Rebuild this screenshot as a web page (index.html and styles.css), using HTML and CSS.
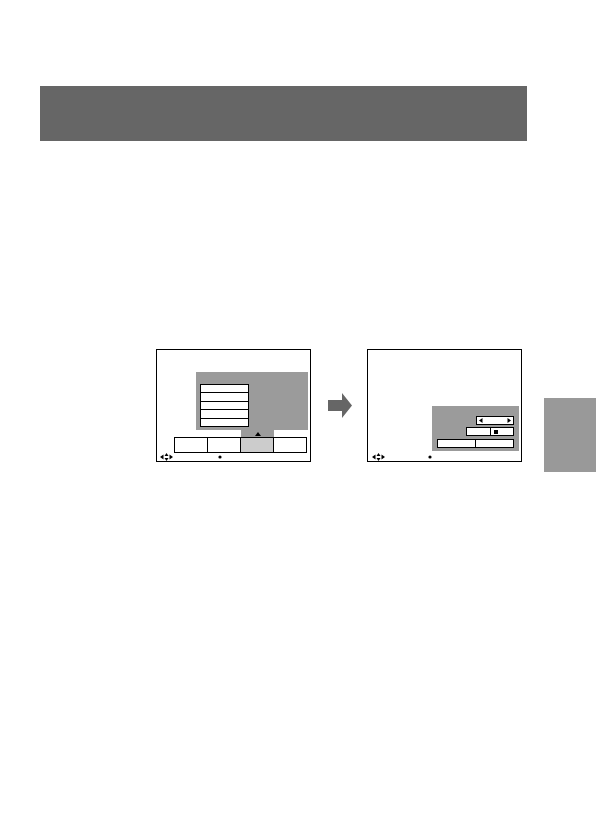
FILE: index.html
```html
<!DOCTYPE html>
<html>
<head>
<meta charset="utf-8">
<link rel="stylesheet" href="styles.css">
</head>
<body>
<div class="header"></div>
<div class="figure">
  <div class="screen s1">
    <div class="panel1">
      <div class="list">
        <div class="item"></div>
        <div class="item"></div>
        <div class="item"></div>
        <div class="item"></div>
        <div class="item"></div>
      </div>
    </div>
    <div class="tab"><span class="tri"></span></div>
    <div class="buttons">
      <div class="btn"></div>
      <div class="btn"></div>
      <div class="btn active"></div>
      <div class="btn"></div>
    </div>
    <div class="footer f1">
      <svg class="nav" width="13" height="8" viewBox="0 0 13 8"><polygon points="0,4 3.5,1.5 3.5,6.5" fill="#000"/><polygon points="6.5,0 4.5,3 8.5,3" fill="#000"/><polygon points="6.5,8 4.5,5 8.5,5" fill="#000"/><polygon points="13,4 9.5,1.5 9.5,6.5" fill="#000"/></svg>
      <svg class="dot" width="4" height="4" viewBox="0 0 4 4"><circle cx="2" cy="2" r="1.6" fill="#000"/></svg>
    </div>
  </div>
  <svg class="arrow" width="24" height="25" viewBox="0 0 24 25"><polygon points="0,7 14,7 14,0 24,12.5 14,25 14,18 0,18" fill="#666"/></svg>
  <div class="screen s2">
    <div class="panel2">
      <div class="box b1">
        <svg width="36" height="7" viewBox="0 0 36 7"><polygon points="2,3.5 5.5,1 5.5,6" fill="#000"/><polygon points="34,3.5 30.5,1 30.5,6" fill="#000"/></svg>
      </div>
      <div class="box b2"><div class="cell"></div><div class="cell"><span class="sq"></span></div></div>
      <div class="box b3"><div class="cell"></div><div class="cell"></div></div>
    </div>
    <div class="footer f2">
      <svg class="nav" width="13" height="8" viewBox="0 0 13 8"><polygon points="0,4 3.5,1.5 3.5,6.5" fill="#000"/><polygon points="6.5,0 4.5,3 8.5,3" fill="#000"/><polygon points="6.5,8 4.5,5 8.5,5" fill="#000"/><polygon points="13,4 9.5,1.5 9.5,6.5" fill="#000"/></svg>
      <svg class="dot" width="4" height="4" viewBox="0 0 4 4"><circle cx="2" cy="2" r="1.6" fill="#000"/></svg>
    </div>
  </div>
  <div class="sidetab"></div>
</div>
</body>
</html>
```
FILE: styles.css
```css
html, body {
  margin: 0;
  padding: 0;
  background: #fff;
  font-family: "Liberation Sans", Arial, sans-serif;
}
.header {
  margin: 86px 0 0 40px;
  width: 487px;
  height: 55px;
  background: #666;
}
.figure {
  display: flex;
  align-items: flex-start;
  margin-top: 208px;
}
.screen {
  box-sizing: border-box;
  width: 155px;
  height: 113px;
  border: 1.3px solid #000;
  display: flex;
  flex-direction: column;
}
.s1 { margin-left: 156px; }
.s2 { margin-left: 15px; }
.arrow {
  display: block;
  margin-left: 17px;
  margin-top: 44px;
}
.sidetab {
  margin-left: 22px;
  margin-top: 49px;
  width: 52px;
  height: 74px;
  background: #999;
}
.panel1 {
  margin: 22px 0 0 39px;
  width: 112px;
  height: 58px;
  background: #9b9b9b;
  box-sizing: border-box;
  padding: 12px 0 0 4px;
}
.list {
  box-sizing: border-box;
  width: 49px;
  height: 43px;
  border: 1.2px solid #000;
  background: #fff;
  display: flex;
  flex-direction: column;
}
.item {
  flex: 1;
  border-top: 1.2px solid #000;
}
.item:first-child { border-top: none; }
.tab {
  margin-left: 84px;
  width: 33px;
  height: 7px;
  background: #9b9b9b;
  display: flex;
  justify-content: center;
  align-items: flex-end;
}
.tri {
  width: 0;
  height: 0;
  border-left: 3.5px solid transparent;
  border-right: 3.5px solid transparent;
  border-bottom: 4px solid #000;
  margin-bottom: 1px;
}
.buttons {
  margin-left: 17px;
  width: 133px;
  height: 16px;
  box-sizing: border-box;
  border: 1.2px solid #000;
  display: flex;
}
.btn {
  flex: 1;
  border-left: 1.2px solid #000;
}
.btn:first-child { border-left: none; }
.btn.active { background: #ccc; }
.footer {
  height: 8px;
  display: flex;
  align-items: center;
}
.nav { display: block; }
.dot { display: block; }
.f1 .nav { margin-left: 3px; }
.f1 .dot { margin-left: 45px; }
.f2 { margin-top: 2px; }
.f2 .nav { margin-left: 4px; }
.f2 .dot { margin-left: 43px; }
.panel2 {
  margin: 56px 0 0 64px;
  width: 87px;
  height: 45px;
  box-sizing: border-box;
  background: #9b9b9b;
  padding: 10px 5px 0 0;
  display: flex;
  flex-direction: column;
  align-items: flex-end;
}
.box {
  box-sizing: border-box;
  height: 9px;
  border: 1.2px solid #000;
  background: #fff;
  display: flex;
}
.b1 { width: 38px; align-items: center; }
.b1 svg { display: block; }
.b2 { width: 48px; margin-top: 2px; }
.b3 { width: 77px; margin-top: 3px; }
.cell { flex: 1; display: flex; align-items: center; }
.cell + .cell { border-left: 1.2px solid #000; }
.b2 .cell:first-child { flex: 0 0 23px; }
.b3 .cell:first-child { flex: 0 0 37px; }
.sq {
  display: block;
  width: 4px;
  height: 4px;
  background: #000;
  margin-left: 3px;
}
```
